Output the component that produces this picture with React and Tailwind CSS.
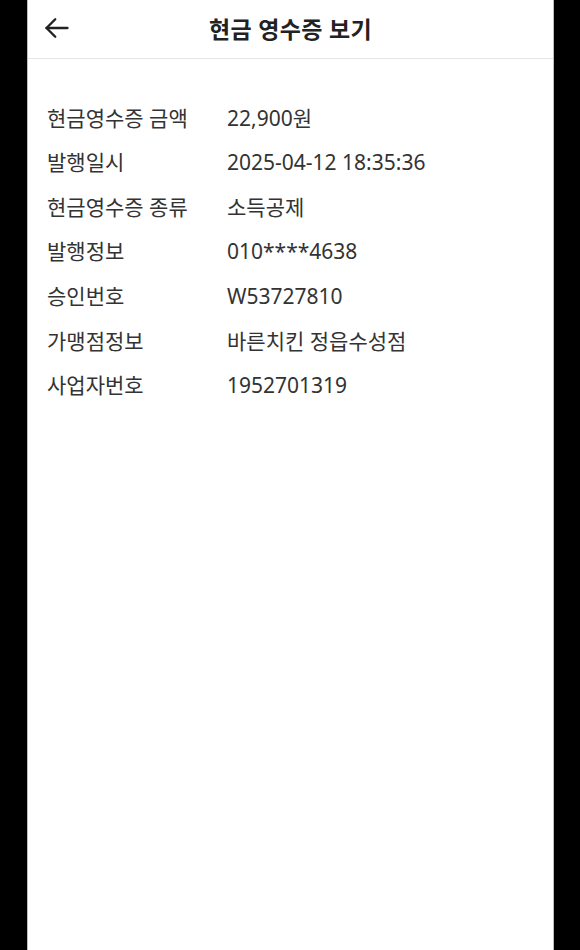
import React from 'react'

const rows = [
  ['현금영수증 금액', '22,900원'],
  ['발행일시', '2025-04-12 18:35:36'],
  ['현금영수증 종류', '소득공제'],
  ['발행정보', '010****4638'],
  ['승인번호', 'W53727810'],
  ['가맹점정보', '바른치킨 정읍수성점'],
  ['사업자번호', '1952701319'],
]

export default function App() {
  return (
    <div
      className="w-[580px] h-[950px] bg-black flex justify-center"
      style={{ fontFamily: '"Noto Sans", "Noto Sans CJK KR", sans-serif' }}
    >
      <div className="w-[527px] h-full bg-white border-x border-[#bdbdbd] ml-[1px]">
        {/* Header */}
        <div className="relative h-[59px] flex items-center justify-center border-b border-[#e6e6e6]">
          <button className="absolute left-[15px] top-[14px] p-0 text-[#222]">
            <svg width="28" height="28" viewBox="0 0 24 24" fill="none" stroke="currentColor" strokeWidth="2" strokeLinecap="round" strokeLinejoin="round">
              <path d="M21 12H3" />
              <path d="M10.5 4.5L3 12l7.5 7.5" />
            </svg>
          </button>
          <h1 className="text-[23px] font-bold text-[#222] tracking-[0.3px] mt-[1px]">현금 영수증 보기</h1>
        </div>

        {/* Details */}
        <div className="pt-[37px] pl-[19px]">
          {rows.map(([k, v]) => (
            <div key={k} className="h-[44.6px] flex items-center text-[21px] text-[#333]">
              <span className="w-[180px] shrink-0">{k}</span>
              <span>{v}</span>
            </div>
          ))}
        </div>
      </div>
    </div>
  )
}
